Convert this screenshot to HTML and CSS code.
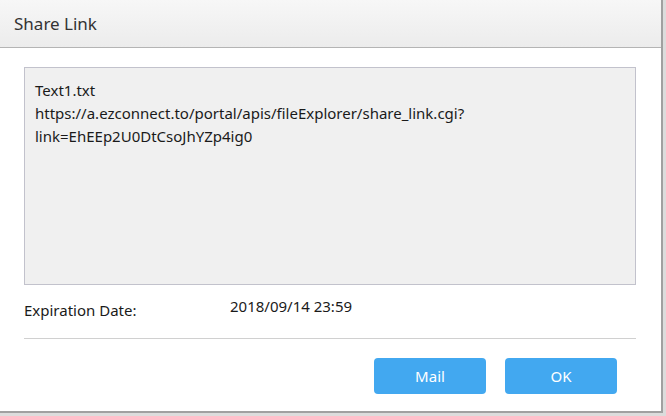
FILE: index.html
```html
<!DOCTYPE html>
<html lang="en">
<head>
<meta charset="UTF-8" />
<title>Share Link</title>
<link rel="stylesheet" href="styles.css">
</head>
<body>

<div class="dialog">
  <div class="dialog-header">
    <h1>Share Link</h1>
  </div>
  <div class="dialog-body">
    <div class="link-box">Text1.txt
https://a.ezconnect.to/portal/apis/fileExplorer/share_link.cgi?
link=EhEEp2U0DtCsoJhYZp4ig0</div>

    <div class="expire-row">
      <span class="expire-label">Expiration Date:</span>
      <span class="expire-value">2018/09/14 23:59</span>
    </div>
  </div>
  <div class="dialog-footer">
    <button class="btn">Mail</button>
    <button class="btn">OK</button>
  </div>
</div>

</body>
</html>
```

FILE: styles.css
```css
html, body {
  margin: 0;
  height: 100%;
  overflow: hidden;
}
body {
  background: #dcdcdc;
  font-family: "Noto Sans", "Open Sans", sans-serif;
  color: #1a1a1a;
}
.dialog {
  width: 661px;
  height: 411px;
  background: #fff;
  border-right: 2px solid #a0a0a0;
  border-bottom: 2px solid #a0a0a0;
  display: flex;
  flex-direction: column;
}
.dialog-header {
  height: 47px;
  background: linear-gradient(#f7f7f7, #ececec);
  border-bottom: 1px solid #b4b4b4;
  display: flex;
  align-items: center;
  padding-left: 14px;
}
.dialog-header h1 {
  margin: 0;
  font-size: 17px;
  font-weight: normal;
  color: #333;
}
.dialog-body {
  padding: 19px 25px 0 24px;
}
.link-box {
  height: 194px;
  padding: 11px 10px;
  background: #f0f0f0;
  border: 1px solid #c2c2cc;
  white-space: pre-line;
  font-size: 15px;
  line-height: 23px;
}
.expire-row {
  display: flex;
  height: 54px;
  border-bottom: 1px solid #d0d0d0;
  font-size: 15px;
  padding-top: 11px;
  box-sizing: border-box;
}
.expire-label {
  width: 206px;
  padding-top: 4px;
}
.dialog-footer {
  display: flex;
  justify-content: flex-end;
  gap: 19px;
  padding: 19px 44px 0 0;
}
.btn {
  width: 112px;
  height: 36px;
  background: #42a8f0;
  color: #fff;
  border: none;
  border-radius: 4px;
  font-family: inherit;
  font-size: 15px;
}
```
